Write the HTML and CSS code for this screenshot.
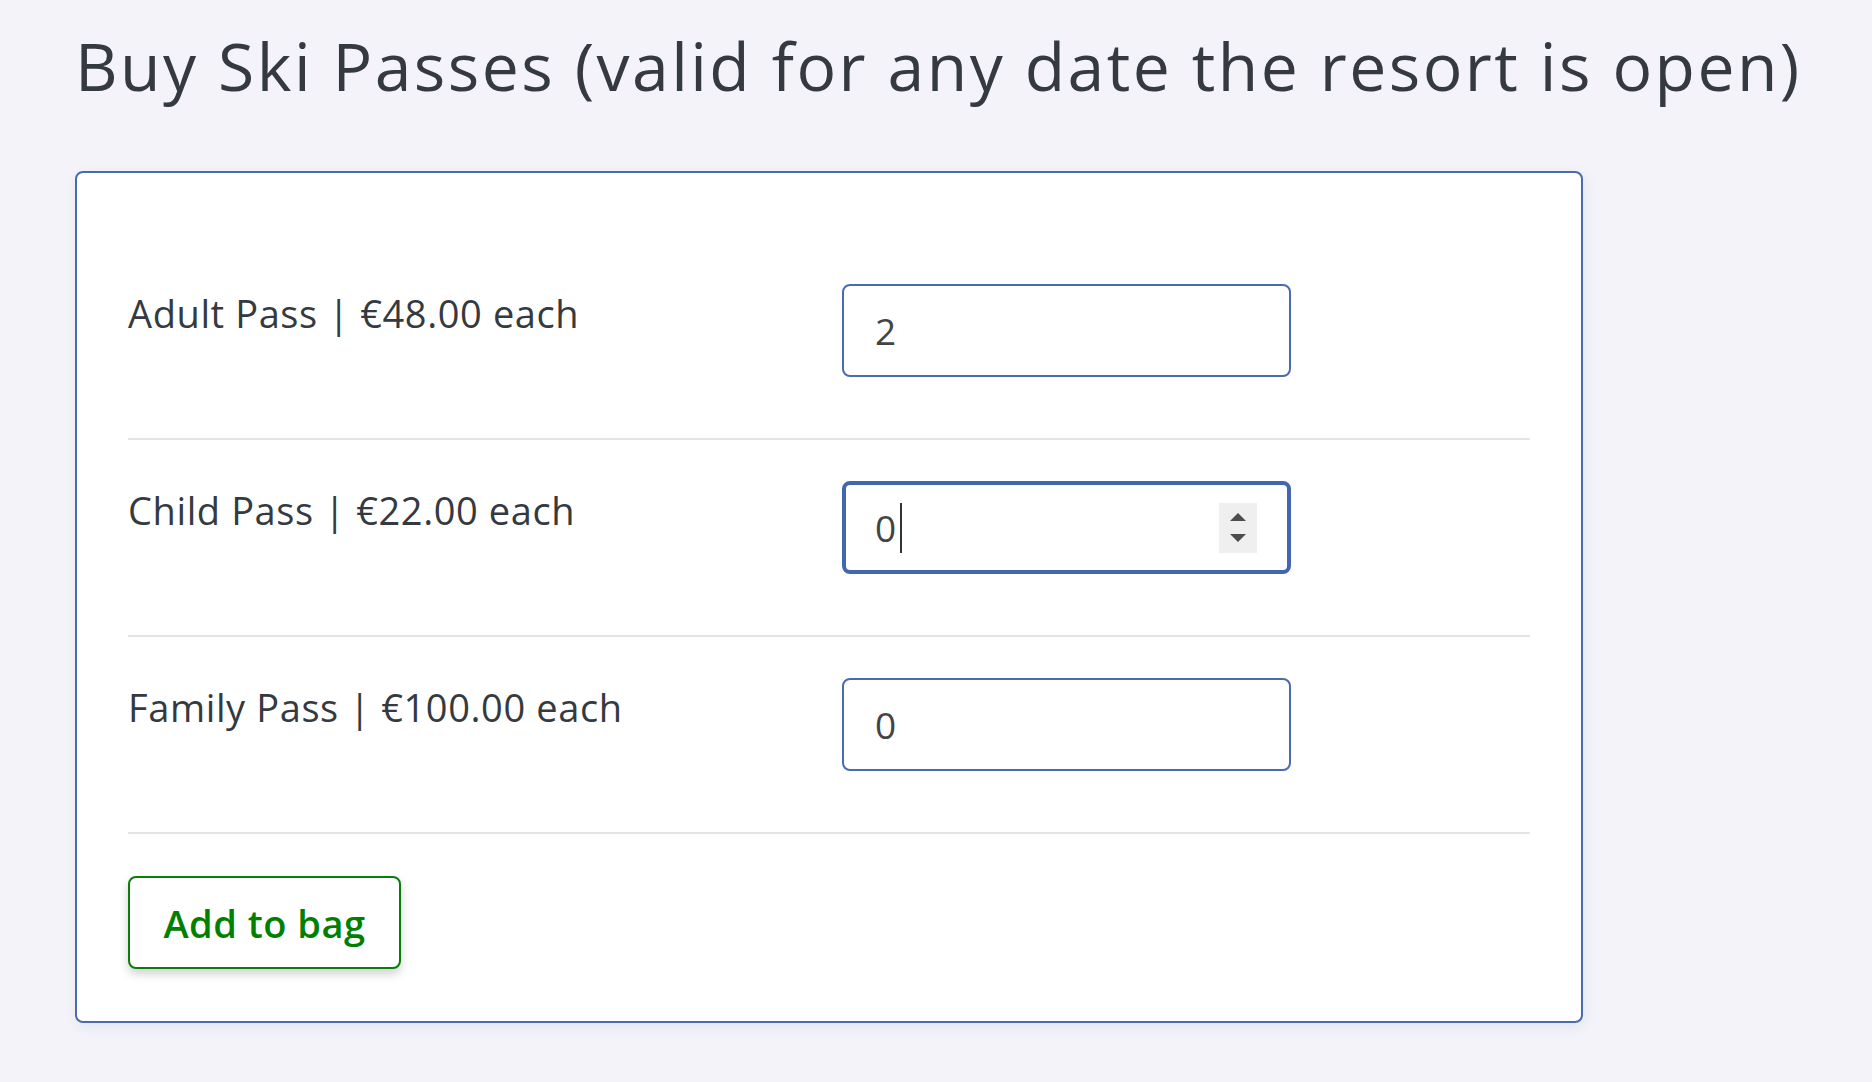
FILE: index.html
```html
<!DOCTYPE html>
<html lang="en">
<head>
<meta charset="utf-8">
<title>Buy Ski Passes</title>
<link rel="stylesheet" href="styles.css">
</head>
<body>
<main class="page">
  <h1 class="title">Buy Ski Passes (valid for any date the resort is open)</h1>
  <form class="card">
    <div class="pass-row">
      <label class="pass-label" for="adult">Adult Pass | €48.00 each</label>
      <div class="field"><input class="qty" id="adult" type="text" value="2"></div>
    </div>
    <div class="pass-row">
      <label class="pass-label" for="child">Child Pass | €22.00 each</label>
      <div class="field">
        <input class="qty qty-focus" id="child" type="text" value="0">
        <span class="caret"></span>
        <span class="spinner">
          <svg width="38" height="50" viewBox="0 0 38 50"><rect width="38" height="50" fill="#efefef"/><path d="M11 18 L19 10 L27 18 Z" fill="#4d4d4d"/><path d="M11 31 L27 31 L19 39 Z" fill="#4d4d4d"/></svg>
        </span>
      </div>
    </div>
    <div class="pass-row">
      <label class="pass-label" for="family">Family Pass | €100.00 each</label>
      <div class="field"><input class="qty" id="family" type="text" value="0"></div>
    </div>
    <div class="actions">
      <button class="btn-add" type="button">Add to bag</button>
    </div>
  </form>
</main>
</body>
</html>
```

FILE: styles.css
```css
html, body {
  margin: 0;
  padding: 0;
  background: #f3f3f9;
}
body {
  font-family: "Open Sans", "Noto Sans", sans-serif;
  color: #343a40;
}
.page {
  padding: 0 0 40px 75px;
}
.title {
  margin: 0;
  padding-top: 22px;
  font-weight: 400;
  font-size: 66px;
  line-height: 86px;
  color: #343a40;
  letter-spacing: 2.45px;
}
.card {
  margin-top: 63px;
  width: 1402px;
  border: 2px solid #4a6bb0;
  border-radius: 8px;
  background: #fff;
  padding: 70px 51px 52px 51px;
  box-shadow: 2px 4px 14px rgba(40, 40, 90, 0.07);
}
.pass-row {
  display: grid;
  grid-template-columns: 714px 449px;
  align-items: start;
  padding: 41px 0 61px 0;
  border-bottom: 2px solid #e4e4e4;
}
.pass-label {
  font-size: 38px;
  font-weight: 400;
  line-height: 54px;
  padding-top: 2px;
  color: #343a40;
  letter-spacing: 0.6px;
}
.field {
  position: relative;
  width: 449px;
  height: 93px;
}
.qty {
  box-sizing: border-box;
  width: 449px;
  height: 93px;
  margin: 0;
  border: 2px solid #4a6bb0;
  border-radius: 8px;
  padding: 0 0 0 31px;
  font-family: "Open Sans", "Noto Sans", sans-serif;
  font-size: 37px;
  color: #444;
  background: #fff;
  outline: none;
}
.qty-focus {
  border: 4px solid #4266b0;
  padding-left: 29px;
}
.caret {
  position: absolute;
  left: 58px;
  top: 22px;
  width: 2px;
  height: 50px;
  background: #333;
}
.spinner {
  position: absolute;
  right: 34px;
  top: 22px;
  width: 38px;
  height: 50px;
  line-height: 0;
}
.actions {
  padding-top: 42px;
}
.btn-add {
  box-sizing: border-box;
  width: 273px;
  height: 93px;
  border: 2px solid #0a7d0a;
  border-radius: 8px;
  background: #fff;
  color: #008000;
  font-family: "Open Sans", "Noto Sans", sans-serif;
  font-size: 38px;
  font-weight: 600;
  letter-spacing: 0.5px;
  box-shadow: 0 5px 10px rgba(0, 0, 0, 0.18);
  padding: 0;
  cursor: pointer;
}
```
